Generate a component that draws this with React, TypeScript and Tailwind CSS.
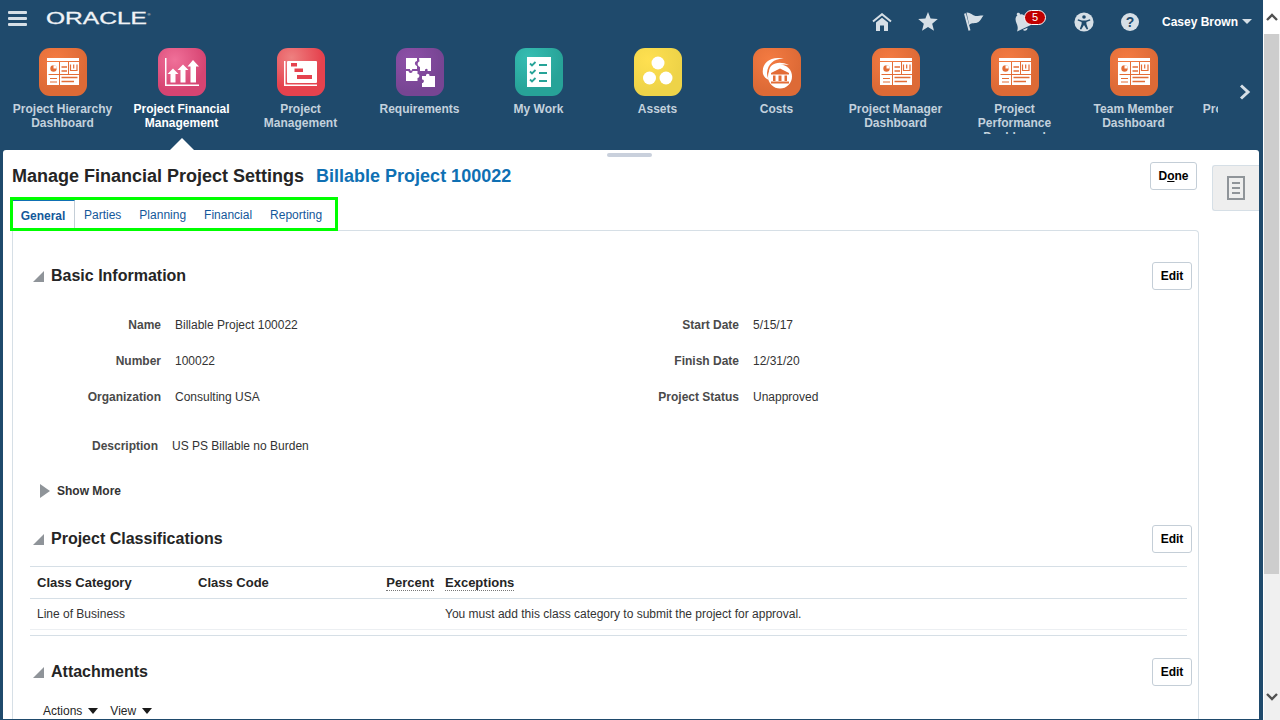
import type { ReactNode } from "react";

const tiles = [
  { label: "Project Hierarchy Dashboard", icon: "dash" },
  { label: "Project Financial Management", icon: "fin", active: true },
  { label: "Project Management", icon: "gantt" },
  { label: "Requirements", icon: "puzzle" },
  { label: "My Work", icon: "check" },
  { label: "Assets", icon: "assets" },
  { label: "Costs", icon: "costs" },
  { label: "Project Manager Dashboard", icon: "dash" },
  { label: "Project Performance Dashboard", icon: "dash" },
  { label: "Team Member Dashboard", icon: "dash" },
  { label: "Project Hierarchy Dashboard", icon: "none" },
];

function DashGlyph() {
  const c = "#e36d37";
  return (
    <g>
      <rect x="8" y="10" width="32" height="3" fill="#fff" />
      <rect x="8" y="14" width="32" height="23" fill="#fff" />
      <circle cx="14.5" cy="20.5" r="3.2" fill={c} />
      <path d="M14.5 20.5V17.3A3.2 3.2 0 0 1 17.7 20.5Z" fill="#fff" />
      <path d="M20.5 14V37" stroke={c} strokeWidth="1" />
      <path d="M9.5 26.5H20M29.5 14V26M20 26.5H40" stroke={c} strokeWidth="1" />
      <path d="M11 30.5H18M11 34H18" stroke={c} strokeWidth="1.2" />
      <path d="M22.5 19H28M22.5 23H28" stroke={c} strokeWidth="1.4" />
      <path d="M22.5 29.5H38.5M22.5 33.5H35" stroke={c} strokeWidth="1.6" />
      <path d="M31.5 16.5V22.5H38V16.5M34.7 16.5V20.5" stroke={c} strokeWidth="1.2" fill="none" />
    </g>
  );
}

function TileIcon({ name }: { name: string }) {
  if (name === "none") return <div className="w-12 h-12" />;
  const bg: Record<string, string> = {
    dash: "bg-[radial-gradient(circle_at_35%_25%,#f47b42,#dd6a36_65%)]",
    fin: "bg-[radial-gradient(circle_at_35%_25%,#f07099,#d64472_65%)]",
    gantt: "bg-[radial-gradient(circle_at_30%_20%,#ee8080,#e5424e_60%)]",
    puzzle: "bg-[radial-gradient(circle_at_30%_25%,#8e50a8,#774593_65%)]",
    check: "bg-[radial-gradient(circle_at_30%_20%,#36bdb2,#27a398_65%)]",
    assets: "bg-[radial-gradient(circle_at_30%_25%,#ffe050,#eed348_65%)]",
    costs: "bg-[radial-gradient(circle_at_35%_25%,#f47b42,#dd6a36_65%)]",
  };
  return (
    <div className={`w-12 h-12 rounded-[11px] ${bg[name]}`}>
      <svg width="48" height="48" viewBox="0 0 48 48">
        {name === "dash" && <DashGlyph />}
        {name === "fin" && (
          <g fill="#fff">
            <path d="M7 10V38H41V36.5H8.5V10Z" />
            <path d="M15 20.5L20.5 26H17.5V34.5H12.5V26H9.5Z" />
            <path d="M25 16.5L30.5 22H27.5V34.5H22.5V22H19.5Z" />
            <path d="M35 12L41 18.5H38V34.5H32.5V18.5H29.5Z" />
          </g>
        )}
        {name === "gantt" && (
          <g>
            <path d="M7 13H8.5V36.5H40V38H7Z" fill="#fff" />
            <rect x="10" y="13" width="30" height="22" rx="1" fill="#fff" />
            <rect x="14" y="15" width="6" height="3.5" fill="#e5424e" />
            <rect x="17.5" y="20.5" width="8.5" height="3.5" fill="#e5424e" />
            <rect x="20" y="27" width="15" height="4" fill="#e5424e" />
          </g>
        )}
        {name === "puzzle" && (
          <g fill="#fff">
            <path d="M10 10H21V13C18.5 13 18 17 21 18V21H16C17 23 13.5 23 14 21H10Z" />
            <path d="M23 10H35V23H31.5C32.5 20 28.5 20 29 23H24V19C21 18 21 14 23.5 13.5Z" />
            <path d="M10 23H12.5C12.5 25.5 17 25.5 16.5 23H21.5V26C24 25.5 24 30 21.5 30V33H10Z" />
            <path d="M26 28H30C29.5 25 34 25 33.5 28H39V39H26V35C28.5 35 28.5 31 26 31.5Z" />
          </g>
        )}
        {name === "check" && (
          <g>
            <rect x="12" y="9" width="24" height="30" fill="#fff" />
            <g stroke="#27a398" fill="none">
              <path d="M15 15.5L17 17.5L20.5 14M15 23.5L17 25.5L20.5 22M15 31.5L17 33.5L20.5 30" strokeWidth="1.8" />
              <path d="M24 17H32M24 25H32M24 33H32" strokeWidth="2" />
            </g>
          </g>
        )}
        {name === "assets" && (
          <g fill="#fff">
            <circle cx="24" cy="15" r="6.5" />
            <circle cx="15.5" cy="30" r="6.5" />
            <circle cx="32" cy="30" r="6.5" />
          </g>
        )}
        {name === "costs" && (
          <g>
            <path d="M10 26C8 15 18 7 32 11C22 10 15 15 14 25C14 28 15 30 16 32C13 31 11 29 10 26Z" fill="#fff" />
            <path d="M16 24C16 16 25 12 36 17C28 15 20 18 19 26Z" fill="#fff" />
            <circle cx="27" cy="28.5" r="12" fill="#fff" />
            <path d="M27 20.5L36 25V26.5H18V25Z" fill="#e36d37" />
            <path d="M20 27.5H22.5V33H20ZM25.5 27.5H28.5V33H25.5ZM31.5 27.5H34V33H31.5ZM18 33.5H36V35.5H18Z" fill="#e36d37" />
          </g>
        )}
      </svg>
    </div>
  );
}

function Corner({ className }: { className: string }) {
  return (
    <svg width="11" height="11" viewBox="0 0 11 11" className={className}>
      <polygon points="11,0 11,11 0,11" fill="#8f9499" />
    </svg>
  );
}

function EditButton({ children }: { children: ReactNode }) {
  return (
    <button className="h-[28px] w-[40px] bg-white border border-[#c4ced7] rounded-[3px] text-xs font-bold text-black">
      {children}
    </button>
  );
}

function SectionHead({ title }: { title: string }) {
  return (
    <div className="flex items-center justify-between h-[28px]">
      <div className="flex items-center">
        <Corner className="ml-[20px] mr-[7px] mt-[1px]" />
        <h2 className="text-base font-bold text-[#252525]">{title}</h2>
      </div>
      <EditButton>Edit</EditButton>
    </div>
  );
}

function Field({ label, value, width }: { label: string; value: string; width: string }) {
  return (
    <div className="flex items-center h-[36px] text-xs text-[#333]">
      <div className={`${width} text-right font-bold text-[#4a4a4a]`}>{label}</div>
      <div className="ml-[14px]">{value}</div>
    </div>
  );
}

function TopIcons() {
  const c = "#d6dfe6";
  return (
    <div className="flex items-center ml-auto mt-[3px]">
      <svg width="20" height="18" viewBox="0 0 20 18" className="mr-[26px]">
        <path d="M1 8.5L10 1.2L19 8.5" fill="none" stroke={c} strokeWidth="2" />
        <path d="M4 9.5L10 4.7L16 9.5V18H12V12.5H8V18H4Z" fill={c} />
      </svg>
      <svg width="20" height="19" viewBox="0 0 20 19" className="mr-[26px]">
        <polygon points="10,0 12.6,6.6 19.8,7.1 14.2,11.7 16,18.8 10,14.9 4,18.8 5.8,11.7 0.2,7.1 7.4,6.6" fill={c} />
      </svg>
      <svg width="20" height="19" viewBox="0 0 20 19" className="mr-[28px]">
        <path d="M1 1.5L5.5 18.5" stroke={c} strokeWidth="2" />
        <path d="M2.5 0.5C6 0 8.5 3.5 11.5 4C14 4.3 17 3 19.5 3.5C17.5 6 16.5 8.5 14.5 10C11.5 12 8 10 5.2 13Z" fill={c} />
      </svg>
      <div className="relative w-[20px] h-[20px] mr-[42px]">
        <svg width="20" height="20" viewBox="0 0 20 20">
          <g transform="rotate(-25 10 10)" fill={c}>
            <circle cx="10" cy="1.5" r="1.6" />
            <path d="M10 2C6 2 4.5 5 4.5 9C4.5 13 3 15 1.5 16.5H18.5C17 15 15.5 13 15.5 9C15.5 5 14 2 10 2Z" />
            <path d="M7.5 17.5C8 20 12 20 12.5 17.5Z" />
          </g>
        </svg>
        <span className="absolute left-[12px] top-[-2px] w-[22px] h-[15px] rounded-[8px] bg-[#c00000] border border-white text-white text-[11px] leading-[13px] text-center">
          5
        </span>
      </div>
      <svg width="20" height="20" viewBox="0 0 20 20" className="mr-[27px]">
        <circle cx="10" cy="10" r="9.6" fill={c} />
        <circle cx="10" cy="5" r="1.8" fill="#1f4a6c" />
        <path d="M4 7.3L8 8.4H12L16 7.3L16.4 8.6L12.4 10V12L14.2 17L12.8 17.5L10 13L7.2 17.5L5.8 17L7.6 12V10L3.6 8.6Z" fill="#1f4a6c" />
      </svg>
      <div className="w-[18px] h-[18px] rounded-full bg-[#d6dfe6] text-[#1f4a6c] text-[14px] leading-[18px] font-bold text-center mr-[23px]">
        ?
      </div>
      <span className="text-xs font-bold text-white">Casey Brown</span>
      <svg width="10" height="5" viewBox="0 0 10 5" className="ml-[4px] mr-[11px]">
        <polygon points="0,0 10,0 5,5" fill={c} />
      </svg>
    </div>
  );
}

function Scrollbar() {
  return (
    <div className="w-[17px] h-full flex flex-col bg-[#f0f0f0] border-l border-white">
      <div className="h-[34px] bg-white flex items-center justify-center">
        <svg width="12" height="8" viewBox="0 0 12 8">
          <path d="M1 7L6 2L11 7" fill="none" stroke="#505050" strokeWidth="2.4" />
        </svg>
      </div>
      <div className="h-[540px] w-[15px] bg-[#cdcdcd]" />
      <div className="mt-auto h-[46px] flex items-center justify-center">
        <svg width="12" height="8" viewBox="0 0 12 8">
          <path d="M1 1L6 6L11 1" fill="none" stroke="#505050" strokeWidth="2.4" />
        </svg>
      </div>
    </div>
  );
}

export default function App() {
  return (
    <div className="w-[1280px] h-[720px] flex overflow-hidden bg-white font-['Liberation_Sans',Arial,sans-serif]">
      <div className="w-[1263px] h-full flex flex-col bg-[#1f4a6c]">
        {/* top bar */}
        <header className="h-[40px] flex items-center shrink-0">
          <div className="ml-[8px] w-[19px] flex flex-col gap-[3px] mb-[3px]">
            <div className="h-[3px] bg-[#d6dfe6] rounded-[1px]" />
            <div className="h-[3px] bg-[#d6dfe6] rounded-[1px]" />
            <div className="h-[3px] bg-[#d6dfe6] rounded-[1px]" />
          </div>
          <svg width="106" height="20" viewBox="0 0 106 20" className="ml-[19px] mb-[5px]">
            <text x="0" y="16" fontSize="17" fill="#f0f3f6" stroke="#f0f3f6" strokeWidth="0.3" textLength="101" lengthAdjust="spacingAndGlyphs">
              ORACLE
            </text>
            <text x="101.5" y="8" fontSize="4" fill="#f0f3f6">
              ®
            </text>
          </svg>
          <TopIcons />
        </header>

        {/* app tiles */}
        <nav className="relative h-[110px] shrink-0 flex">
          <div className="w-[1218px] h-[94px] overflow-hidden flex pl-[3px]">
            {tiles.map((t, i) => (
              <div key={i} className="w-[119px] shrink-0 pt-[8px] flex flex-col items-center">
                <TileIcon name={t.icon} />
                <div
                  className={`mt-[6px] text-xs leading-[14px] font-bold text-center w-[119px] px-[8px] ${
                    t.active ? "text-white" : "text-[#c3d1dd]"
                  }`}
                >
                  {t.label}
                </div>
              </div>
            ))}
          </div>
          <svg width="12" height="16" viewBox="0 0 12 16" className="ml-[21px] mt-[44px]">
            <path d="M2 1.5L9 8L2 14.5" fill="none" stroke="#d6dfe6" strokeWidth="3" />
          </svg>
          <div className="absolute left-[170px] bottom-0 w-0 h-0 border-x-[12px] border-x-transparent border-b-[12px] border-b-white" />
        </nav>

        {/* page */}
        <main className="relative flex-1 min-h-0 ml-[3px] mr-[4px] mb-[1px] bg-white rounded-t-[3px] flex overflow-hidden">
          <div className="absolute left-[604px] top-[3px] w-[45px] h-[4px] rounded-full bg-[#c9d0dc]" />

          <div className="w-[1197px] shrink-0 pl-[9px] pr-[1px] flex flex-col">
            <div className="mt-[12px] h-[28px] flex items-center justify-between pr-[2px] shrink-0">
              <h1 className="text-lg font-bold text-[#252525]">
                Manage Financial Project Settings
                <span className="ml-[12px] text-[#0f70b3]">Billable Project 100022</span>
              </h1>
              <button className="h-[28px] w-[47px] bg-white border border-[#c4ced7] rounded-[3px] text-xs font-bold text-black">
                D<span className="underline">o</span>ne
              </button>
            </div>

            {/* tabs, green box is a review marker on top of them */}
            <div className="relative mt-[10px] h-[30px] flex items-stretch text-xs text-[#14589a] shrink-0">
              <div className="w-[63px] border-t border-t-[#0f70b3] border-r border-r-[#c4ced7] font-bold flex items-center justify-center bg-white">
                General
              </div>
              <div className="pl-[9px] flex items-center gap-[18px]">
                <span>Parties</span>
                <span>Planning</span>
                <span>Financial</span>
                <span>Reporting</span>
              </div>
              <div className="absolute left-[-2px] top-[-3px] w-[328px] h-[34px] border-[3px] border-[#00ff00]" />
            </div>

            <div className="flex-1 min-h-0 border border-b-0 border-[#d6dfe6] rounded-tr-[4px] pr-[6px] overflow-hidden">
              <div className="mt-[31px]">
                <SectionHead title="Basic Information" />
              </div>

              <div className="mt-[17px] flex">
                <div className="w-[587px]">
                  <Field width="w-[148px]" label="Name" value="Billable Project 100022" />
                  <Field width="w-[148px]" label="Number" value="100022" />
                  <Field width="w-[148px]" label="Organization" value="Consulting USA" />
                  <div className="mt-[13px]">
                    <Field width="w-[145px]" label="Description" value="US PS Billable no Burden" />
                  </div>
                </div>
                <div>
                  <Field width="w-[139px]" label="Start Date" value="5/15/17" />
                  <Field width="w-[139px]" label="Finish Date" value="12/31/20" />
                  <Field width="w-[139px]" label="Project Status" value="Unapproved" />
                </div>
              </div>

              <div className="mt-[16px] h-[22px] flex items-center ml-[27px] text-xs font-bold text-[#333]">
                <svg width="10" height="14" viewBox="0 0 10 14" className="mr-[7px]">
                  <polygon points="0,0 10,7 0,14" fill="#8f9499" />
                </svg>
                Show More
              </div>

              <div className="mt-[23px]">
                <SectionHead title="Project Classifications" />
              </div>

              <div className="mt-[13px] ml-[17px] mr-[5px] border-t border-[#d6dfe6]">
                <div className="grid grid-cols-[162px_161px_86px_1fr] h-[32px] items-center border-b border-[#d6dfe6] text-[13px] font-bold text-[#252525]">
                  <div className="pl-[7px]">Class Category</div>
                  <div className="pl-[6px]">Class Code</div>
                  <div className="text-right pr-[5px]">
                    <span className="border-b border-dotted border-[#777]">Percent</span>
                  </div>
                  <div className="pl-[6px]">
                    <span className="border-b border-dotted border-[#777]">Exceptions</span>
                  </div>
                </div>
                <div className="grid grid-cols-[162px_161px_86px_1fr] h-[31px] items-center border-b border-[#eceff2] text-xs text-[#333]">
                  <div className="pl-[7px]">Line of Business</div>
                  <div />
                  <div />
                  <div className="pl-[6px]">You must add this class category to submit the project for approval.</div>
                </div>
                <div className="mt-[5px] border-t border-[#d6dfe6]" />
              </div>

              <div className="mt-[22px]">
                <SectionHead title="Attachments" />
              </div>

              <div className="mt-[14px] h-[22px] flex items-center ml-[30px] text-xs text-[#252525]">
                Actions
                <svg width="10" height="6" viewBox="0 0 10 6" className="ml-[6px] mr-[12px]">
                  <polygon points="0,0 10,0 5,6" fill="#1a1a1a" />
                </svg>
                View
                <svg width="10" height="6" viewBox="0 0 10 6" className="ml-[6px]">
                  <polygon points="0,0 10,0 5,6" fill="#1a1a1a" />
                </svg>
              </div>
            </div>
          </div>

          {/* right drawer tab */}
          <div className="flex-1 pl-[12px] pt-[15px]">
            <div className="h-[46px] bg-[#eeeeee] border border-r-0 border-[#d6dfe6] rounded-l-[3px] flex items-center justify-center">
              <svg width="18" height="24" viewBox="0 0 18 24">
                <path d="M1 1H17V23H1Z" fill="none" stroke="#8f9499" strokeWidth="2" />
                <path d="M5 7H13M5 12H13M5 17H13" stroke="#8f9499" strokeWidth="2" />
              </svg>
            </div>
          </div>
        </main>
      </div>
      <Scrollbar />
    </div>
  );
}
